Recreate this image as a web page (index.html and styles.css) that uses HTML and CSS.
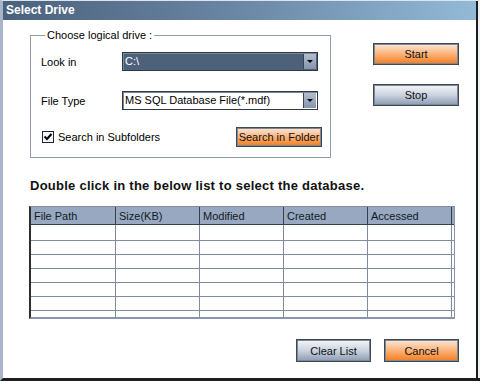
FILE: index.html
```html
<!DOCTYPE html>
<html>
<head>
  <title>Select Drive</title>
  <link rel="stylesheet" href="styles.css">
</head>
<body>
  <div class="window">
    <div class="titlebar">Select Drive</div>
    <div class="content">
      <div class="top">
        <fieldset class="group">
          <legend>Choose logical drive :</legend>
          <div class="field">
            <span class="field-label">Look in</span>
            <div class="combo combo-active">
              <span class="combo-text">C:\</span>
              <span class="combo-arrow"></span>
            </div>
          </div>
          <div class="field field-type">
            <span class="field-label">File Type</span>
            <div class="combo">
              <span class="combo-text">MS SQL Database File(*.mdf)</span>
              <span class="combo-arrow"></span>
            </div>
          </div>
          <div class="options">
            <label class="check">
              <span class="checkbox">
                <svg width="10" height="10" viewBox="0 0 10 10"><polyline points="1.5,4.5 4,7 8.5,2" fill="none" stroke="#000" stroke-width="2"/></svg>
              </span>
              Search in Subfolders
            </label>
            <button class="btn btn-orange btn-folder">Search in Folder</button>
          </div>
        </fieldset>
        <div class="side">
          <button class="btn btn-orange btn-side">Start</button>
          <button class="btn btn-blue btn-side btn-stop">Stop</button>
        </div>
      </div>
      <h2 class="hint">Double click in the below list to select the database.</h2>
      <table class="list">
        <colgroup>
          <col class="col-first">
          <col class="col">
          <col class="col">
          <col class="col">
          <col class="col">
          <col class="col-stub">
        </colgroup>
        <thead>
          <tr>
            <th>File Path</th>
            <th>Size(KB)</th>
            <th>Modified</th>
            <th>Created</th>
            <th>Accessed</th>
            <th class="stub"></th>
          </tr>
        </thead>
        <tbody>
          <tr class="row-first"><td></td><td></td><td></td><td></td><td></td><td class="stub"></td></tr>
          <tr><td></td><td></td><td></td><td></td><td></td><td class="stub"></td></tr>
          <tr><td></td><td></td><td></td><td></td><td></td><td class="stub"></td></tr>
          <tr><td></td><td></td><td></td><td></td><td></td><td class="stub"></td></tr>
          <tr><td></td><td></td><td></td><td></td><td></td><td class="stub"></td></tr>
          <tr><td></td><td></td><td></td><td></td><td></td><td class="stub"></td></tr>
          <tr class="row-last"><td></td><td></td><td></td><td></td><td></td><td class="stub"></td></tr>
        </tbody>
      </table>
      <div class="footer">
        <button class="btn btn-blue btn-foot">Clear List</button>
        <button class="btn btn-orange btn-foot">Cancel</button>
      </div>
    </div>
  </div>
</body>
</html>
```

FILE: styles.css
```css
html, body {
  margin: 0;
  background-color: #fff;
}
body {
  font-family: "Liberation Sans", Arial, sans-serif;
  font-size: 11px;
  color: #000;
}
.window {
  width: 480px;
  height: 381px;
  box-sizing: border-box;
  border-top: 1px solid #dde4ec;
  border-left: 3px solid #a6b5c8;
  border-bottom: 3px solid #1e1e1e;
  box-shadow: inset -2px 0 #eef1f4, inset -4px 0 #1e1e1e;
  background-color: #fff;
  display: flex;
  flex-direction: column;
}
.titlebar {
  height: 19px;
  line-height: 19px;
  padding-left: 3px;
  margin-right: 4px;
  color: #fff;
  font-size: 12px;
  font-weight: bold;
  background-image: linear-gradient(to right, #4a617c 0%, #6a87a5 50%, #92bad7 100%);
}
.content {
  padding: 0 21px 0 27px;
}
.top {
  display: flex;
  margin-top: 9px;
}
.group {
  width: 301px;
  box-sizing: border-box;
  margin: 0;
  padding: 0 11px 10px 10px;
  border: 1px solid #8e9db1;
}
.group legend {
  margin-left: 4px;
  padding: 0 2px;
  line-height: 13px;
}
.field {
  display: flex;
  align-items: center;
  margin-top: 10px;
}
.field-type {
  margin-top: 20px;
}
.field-label {
  width: 81px;
}
.combo {
  display: flex;
  width: 196px;
  height: 19px;
  box-sizing: border-box;
  border: 1px solid #2f3845;
  box-shadow: inset 1px 1px 0 #7a8696;
  background-color: #fff;
}
.combo-active {
  background-color: #4e617a;
  color: #fff;
}
.combo-text {
  flex: 1;
  padding-left: 2px;
  line-height: 17px;
}
.combo-arrow {
  width: 12px;
  margin: 1px;
  border-left: 1px solid #3a4452;
  background-image: linear-gradient(#b3bfce, #8494ab);
  display: flex;
  align-items: center;
  justify-content: center;
}
.combo-arrow::after {
  content: "";
  border-left: 3px solid transparent;
  border-right: 3px solid transparent;
  border-top: 3px solid #000;
}
.options {
  display: flex;
  align-items: center;
  justify-content: space-between;
  margin-top: 17px;
  margin-right: -3px;
}
.check {
  display: flex;
  align-items: center;
}
.checkbox {
  width: 12px;
  height: 12px;
  box-sizing: border-box;
  margin: 0 4px 0 1px;
  border: 1px solid #1d2633;
  background-color: #f4f6f9;
  display: flex;
  align-items: center;
  justify-content: center;
}
.btn {
  font-family: "Liberation Sans", Arial, sans-serif;
  font-size: 11px;
  color: #111;
  padding: 0;
  box-sizing: border-box;
  border: 1px solid #3e4754;
  box-shadow: inset 0 0 0 1px #7c8694;
}
.btn-orange {
  background-image: linear-gradient(#fde8d6 0%, #fbb884 45%, #f57c1c 100%);
}
.btn-blue {
  background-image: linear-gradient(#f5f7fa 0%, #cbd3df 50%, #8c9cb3 100%);
}
.btn-folder {
  width: 86px;
  height: 20px;
}
.side {
  display: flex;
  flex-direction: column;
  margin-left: auto;
  margin-top: 14px;
}
.btn-side {
  width: 86px;
  height: 22px;
}
.btn-stop {
  margin-top: 19px;
}
.hint {
  margin: 20px 0 0 0;
  font-size: 13px;
  line-height: 16px;
  font-weight: bold;
  letter-spacing: 0.25px;
  color: #111;
}
.list {
  margin: 12px 0 0 -1px;
  border-collapse: separate;
  border-spacing: 0;
  table-layout: fixed;
  width: 426px;
  border-left: 2px solid #2e2e2e;
  border-top: 1px solid #7f8da1;
  border-right: 1px solid #8494aa;
  border-bottom: 2px solid #8796ab;
}
.col-first {
  width: 85px;
}
.col {
  width: 84px;
}
.col-stub {
  width: 2px;
}
.list th, .list td {
  padding: 0;
  box-sizing: content-box;
  border-right: 1px solid #7d8ba0;
  border-bottom: 1px solid #7d8ba0;
}
.list th {
  height: 17px;
  padding-left: 3px;
  text-align: left;
  font-weight: normal;
  color: #141a24;
  background-color: #97a8c0;
  border-right-color: #353f4c;
  border-bottom-color: #353f4c;
}
.list td {
  height: 13px;
}
.list .row-first td {
  height: 15px;
}
.list .row-last td {
  height: 6px;
  border-bottom: 0;
}
.list .stub {
  padding: 0;
  border-right: 0;
}
.footer {
  display: flex;
  justify-content: flex-end;
  gap: 13px;
  margin-top: 20px;
}
.btn-foot {
  width: 75px;
  height: 23px;
}
```
